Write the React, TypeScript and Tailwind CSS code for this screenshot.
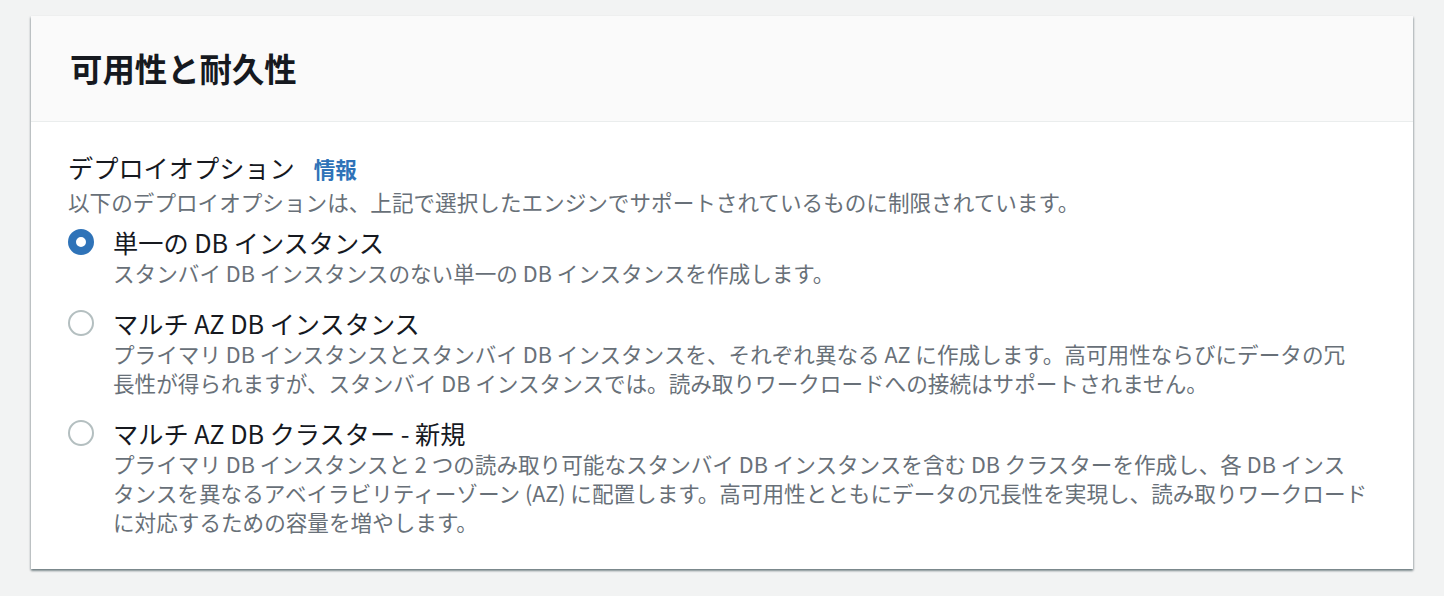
import React from "react";

type Option = {
    label: string;
    lines: string[];
    checked?: boolean;
};

const options: Option[] = [
    {
        label: "単一の DB インスタンス",
        lines: ["スタンバイ DB インスタンスのない単一の DB インスタンスを作成します。"],
        checked: true,
    },
    {
        label: "マルチ AZ DB インスタンス",
        lines: [
            "プライマリ DB インスタンスとスタンバイ DB インスタンスを、それぞれ異なる AZ に作成します。高可用性ならびにデータの冗",
            "長性が得られますが、スタンバイ DB インスタンスでは。読み取りワークロードへの接続はサポートされません。",
        ],
    },
    {
        label: "マルチ AZ DB クラスター - 新規",
        lines: [
            "プライマリ DB インスタンスと 2 つの読み取り可能なスタンバイ DB インスタンスを含む DB クラスターを作成し、各 DB インス",
            "タンスを異なるアベイラビリティーゾーン (AZ) に配置します。高可用性とともにデータの冗長性を実現し、読み取りワークロード",
            "に対応するための容量を増やします。",
        ],
    },
];

function Radio({ checked }: { checked?: boolean }) {
    if (checked) {
        return <div className="w-[26px] h-[26px] rounded-full border-[8px] border-[#2f73b8] bg-white" />;
    }
    return <div className="w-[26px] h-[26px] rounded-full border-[2px] border-[#b4bfc0] bg-white" />;
}

export default function App() {
    return (
        <div className="min-h-screen bg-[#f2f3f3] pt-4 px-[31px] font-['Noto_Sans_CJK_JP','Noto_Sans',sans-serif]">
            <div className="bg-white shadow-[0_2px_2px_0_rgba(0,28,36,0.4),1px_1px_2px_0_rgba(0,28,36,0.15),-1px_1px_2px_0_rgba(0,28,36,0.15)]">
                <div className="h-[106px] bg-[#fafafa] border-b border-[#eaeded] flex items-center pl-[39px]">
                    <h2 className="text-[32.4px] leading-none font-bold text-[#16191f]">可用性と耐久性</h2>
                </div>
                <div className="pl-[37px] pr-[40px] pt-[27px] pb-[33px]">
                    <div className="flex items-baseline">
                        <span className="text-[25.2px] leading-[36px] text-[#16191f]">デプロイオプション</span>
                        <a className="ml-[19px] text-[21.6px] font-bold text-[#2f73b8]">情報</a>
                    </div>
                    <p className="mt-[2px] text-[21.6px] leading-[29px] text-[#687078] whitespace-nowrap">
                        以下のデプロイオプションは、上記で選択したエンジンでサポートされているものに制限されています。
                    </p>
                    <div className="mt-[10px] flex flex-col gap-[20px]">
                        {options.map((o) => (
                            <div key={o.label} className="flex">
                                <div className="h-[32px] flex items-center">
                                    <Radio checked={o.checked} />
                                </div>
                                <div className="ml-[19px]">
                                    <div className="text-[25.2px] leading-[32px] text-[#16191f]">{o.label}</div>
                                    {o.lines.map((l) => (
                                        <div key={l} className="text-[21.6px] leading-[29px] text-[#687078] whitespace-nowrap">
                                            {l}
                                        </div>
                                    ))}
                                </div>
                            </div>
                        ))}
                    </div>
                </div>
            </div>
        </div>
    );
}
